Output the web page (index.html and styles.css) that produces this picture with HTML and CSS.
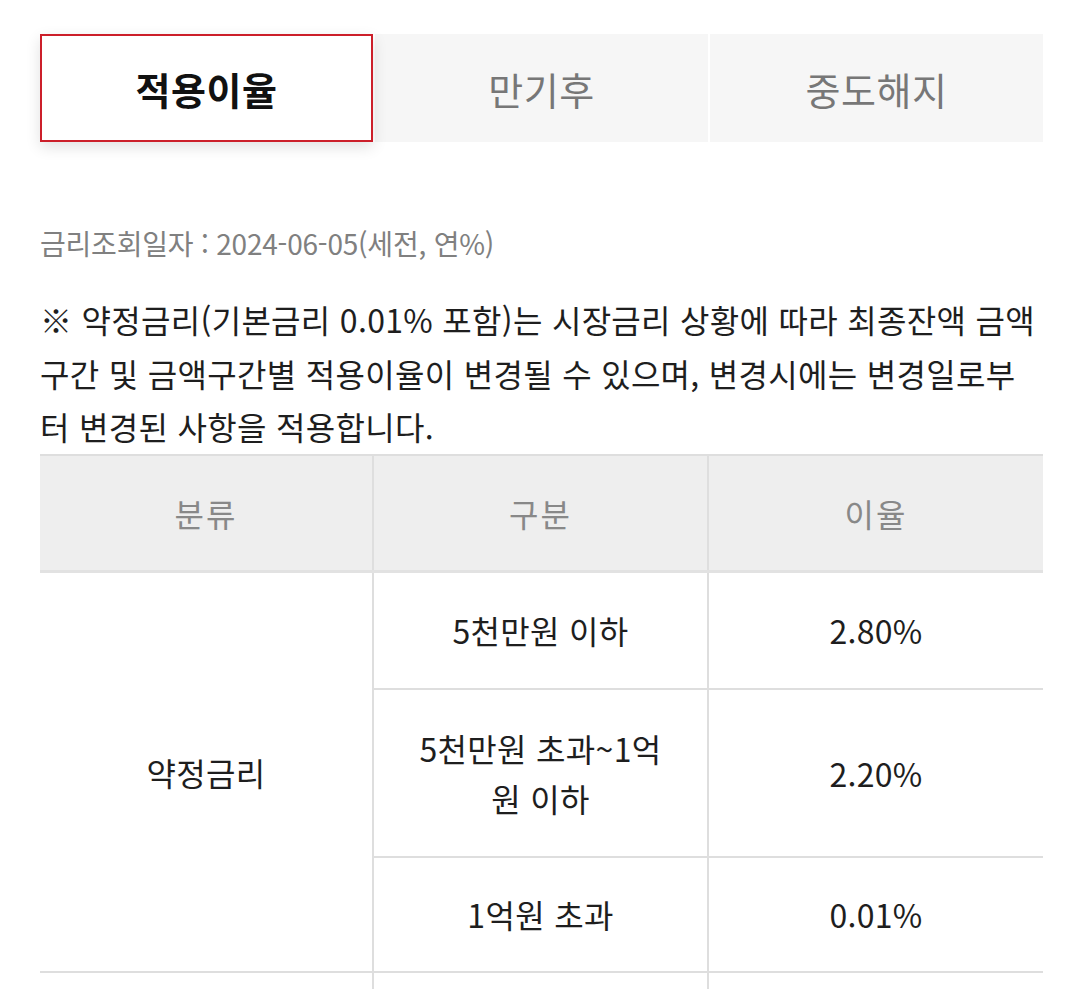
FILE: index.html
```html
<!DOCTYPE html>
<html lang="ko">
<head>
<meta charset="utf-8">
<link rel="stylesheet" href="styles.css">
</head>
<body>
<div class="page">
  <div class="tabs">
    <div class="tab active">적용이율</div>
    <div class="tab">만기후</div>
    <div class="tab">중도해지</div>
  </div>
  <p class="date">금리조회일자 : 2024-06-05(세전, 연%)</p>
  <p class="note">※ 약정금리(기본금리 0.01% 포함)는 시장금리 상황에 따라 최종잔액 금액구간 및 금액구간별 적용이율이 변경될 수 있으며, 변경시에는 변경일로부터 변경된 사항을 적용합니다.</p>
  <table class="rates">
    <colgroup><col class="c1"><col class="c2"><col class="c3"></colgroup>
    <thead>
      <tr class="head"><th>분류</th><th>구분</th><th>이율</th></tr>
    </thead>
    <tbody>
      <tr class="r1"><td rowspan="3">약정금리</td><td>5천만원 이하</td><td>2.80%</td></tr>
      <tr class="r2"><td>5천만원 초과~1억원 이하</td><td>2.20%</td></tr>
      <tr class="r3"><td>1억원 초과</td><td>0.01%</td></tr>
      <tr class="r4"><td></td><td></td><td></td></tr>
    </tbody>
  </table>
</div>
</body>
</html>
```

FILE: styles.css
```css
html, body {
  margin: 0;
  padding: 0;
  background: #fff;
}
body {
  font-family: "Noto Sans CJK KR", "Noto Sans", sans-serif;
  color: #1e1e1e;
}
.page {
  padding: 34px 37px 0 40px;
}
.tabs {
  display: grid;
  grid-template-columns: 1fr 1fr 1fr;
  gap: 2px;
  height: 108px;
}
.tab {
  display: flex;
  align-items: center;
  justify-content: center;
  background: #f6f6f6;
  color: #777;
  font-size: 38px;
  letter-spacing: 0.5px;
}
.tab.active {
  background: #fff;
  border: 2px solid #cc1f2a;
  color: #111;
  font-weight: 700;
  box-shadow: 0 5px 14px rgba(0, 0, 0, 0.12);
  position: relative;
  z-index: 1;
}
.date {
  margin: 81px 0 0;
  font-size: 28px;
  line-height: 40px;
  color: #808080;
  letter-spacing: -0.2px;
}
.note {
  margin: 30px 3px 0 0;
  font-size: 32px;
  line-height: 53.5px;
  letter-spacing: 0.3px;
  color: #1e1e1e;
  word-break: break-all;
}
.rates {
  width: 100%;
  border-collapse: collapse;
  table-layout: fixed;
  font-size: 32px;
  letter-spacing: 0.3px;
}
.c1 { width: 333px; }
.rates th, .rates td {
  border: 2px solid #dedede;
  text-align: center;
  vertical-align: middle;
  padding: 0 38px;
  word-break: break-all;
}
.rates tr > :first-child { border-left: none; }
.rates tr > :last-child { border-right: none; }
.rates th {
  background: #eeeeee;
  color: #888;
  font-weight: 400;
  height: 114px;
  letter-spacing: 2px;
  border-bottom: 3px solid #e2e2e2;
}
.rates td {
  color: #1e1e1e;
  line-height: 50px;
}
.r1 td { height: 115px; }
.r2 td { height: 166px; }
.r3 td { height: 113px; }
.r4 td { height: 40px; border-bottom: none; }
```
